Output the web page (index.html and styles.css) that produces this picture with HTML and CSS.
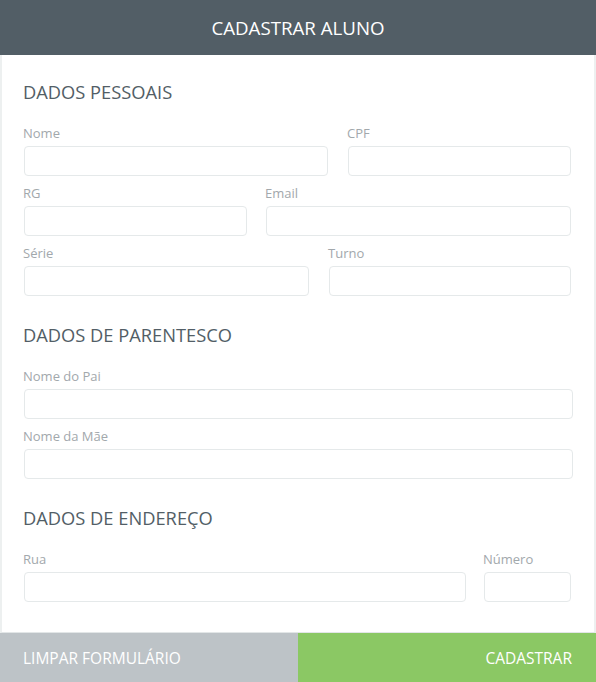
FILE: index.html
```html
<!DOCTYPE html>
<html lang="pt-BR">
<head>
<meta charset="utf-8">
<title>Cadastrar Aluno</title>
<link rel="stylesheet" href="styles.css">
</head>
<body>
<div class="card">
  <header class="topbar">CADASTRAR ALUNO</header>
  <form class="content">
    <section class="section">
      <h2 class="section-title">DADOS PESSOAIS</h2>
      <div class="row row-a">
        <label class="field"><span class="field-label">Nome</span><input class="field-input" type="text"></label>
        <label class="field"><span class="field-label">CPF</span><input class="field-input" type="text"></label>
      </div>
      <div class="row row-b">
        <label class="field"><span class="field-label">RG</span><input class="field-input" type="text"></label>
        <label class="field"><span class="field-label">Email</span><input class="field-input" type="text"></label>
      </div>
      <div class="row row-c">
        <label class="field"><span class="field-label">Série</span><input class="field-input" type="text"></label>
        <label class="field"><span class="field-label">Turno</span><input class="field-input" type="text"></label>
      </div>
    </section>
    <section class="section">
      <h2 class="section-title">DADOS DE PARENTESCO</h2>
      <div class="row row-full">
        <label class="field"><span class="field-label">Nome do Pai</span><input class="field-input" type="text"></label>
      </div>
      <div class="row row-full">
        <label class="field"><span class="field-label">Nome da Mãe</span><input class="field-input" type="text"></label>
      </div>
    </section>
    <section class="section">
      <h2 class="section-title">DADOS DE ENDEREÇO</h2>
      <div class="row row-d">
        <label class="field"><span class="field-label">Rua</span><input class="field-input" type="text"></label>
        <label class="field"><span class="field-label">Número</span><input class="field-input" type="text"></label>
      </div>
    </section>
  </form>
  <footer class="actions">
    <button class="btn btn-clear" type="button">LIMPAR FORMULÁRIO</button>
    <button class="btn btn-submit" type="button">CADASTRAR</button>
  </footer>
</div>
</body>
</html>
```
FILE: styles.css
```css
* { box-sizing: border-box; }

html, body {
  margin: 0;
  padding: 0;
  background: #ffffff;
}

body {
  font-family: "Open Sans", "DejaVu Sans", sans-serif;
  width: 596px;
  height: 682px;
  overflow: hidden;
}

.card {
  display: flex;
  flex-direction: column;
  width: 596px;
  height: 682px;
}

.topbar {
  height: 55px;
  flex: none;
  background: #525e66;
  color: #ffffff;
  font-size: 18.7px;
  font-weight: 400;
  line-height: 55px;
  text-align: center;
}

.content {
  flex: 1;
  display: flex;
  flex-direction: column;
  gap: 27px;
  padding: 25px 21px 0 20px;
  border-left: 2px solid #edf0f0;
  border-right: 2px solid #edf0f0;
  border-bottom: 1px solid #e2e6e7;
  margin: 0;
}

.section {
  display: flex;
  flex-direction: column;
  gap: 7px;
}

.section-title {
  margin: 0 0 12px 0;
  padding-left: 1px;
  font-size: 18.3px;
  line-height: 24px;
  font-weight: 400;
  color: #525e66;
}

.row {
  display: grid;
}

.row-a { grid-template-columns: 308px 227px; column-gap: 16px; }
.row-b { grid-template-columns: 227px 309px; column-gap: 15px; }
.row-c { grid-template-columns: 289px 246px; column-gap: 16px; }
.row-d { grid-template-columns: 446px 91px; column-gap: 14px; }
.row-full { grid-template-columns: 551px; }

.field {
  display: flex;
  flex-direction: column;
  gap: 4px;
}

.field-label {
  padding: 1px 0 0 1px;
  font-size: 13px;
  line-height: 18px;
  color: #a2a8ac;
}

.field-input {
  display: block;
  height: 30px;
  margin: 0 2px;
  padding: 0 8px;
  border: 1px solid #e5e9ea;
  border-radius: 4px;
  background: #ffffff;
  font-family: inherit;
  font-size: 13px;
  outline: none;
}

.row-full .field-input { margin-right: 0; }

.actions {
  flex: none;
  display: grid;
  grid-template-columns: 298px 298px;
  height: 49px;
}

.btn {
  border: 0;
  margin: 0;
  height: 49px;
  font-family: inherit;
  font-size: 15.5px;
  font-weight: 400;
  color: #ffffff;
  cursor: pointer;
}

.btn-clear {
  background: #bdc3c7;
  text-align: left;
  padding: 0 0 0 23px;
}

.btn-submit {
  background: #8bc864;
  text-align: right;
  padding: 0 24px 0 0;
}
```
